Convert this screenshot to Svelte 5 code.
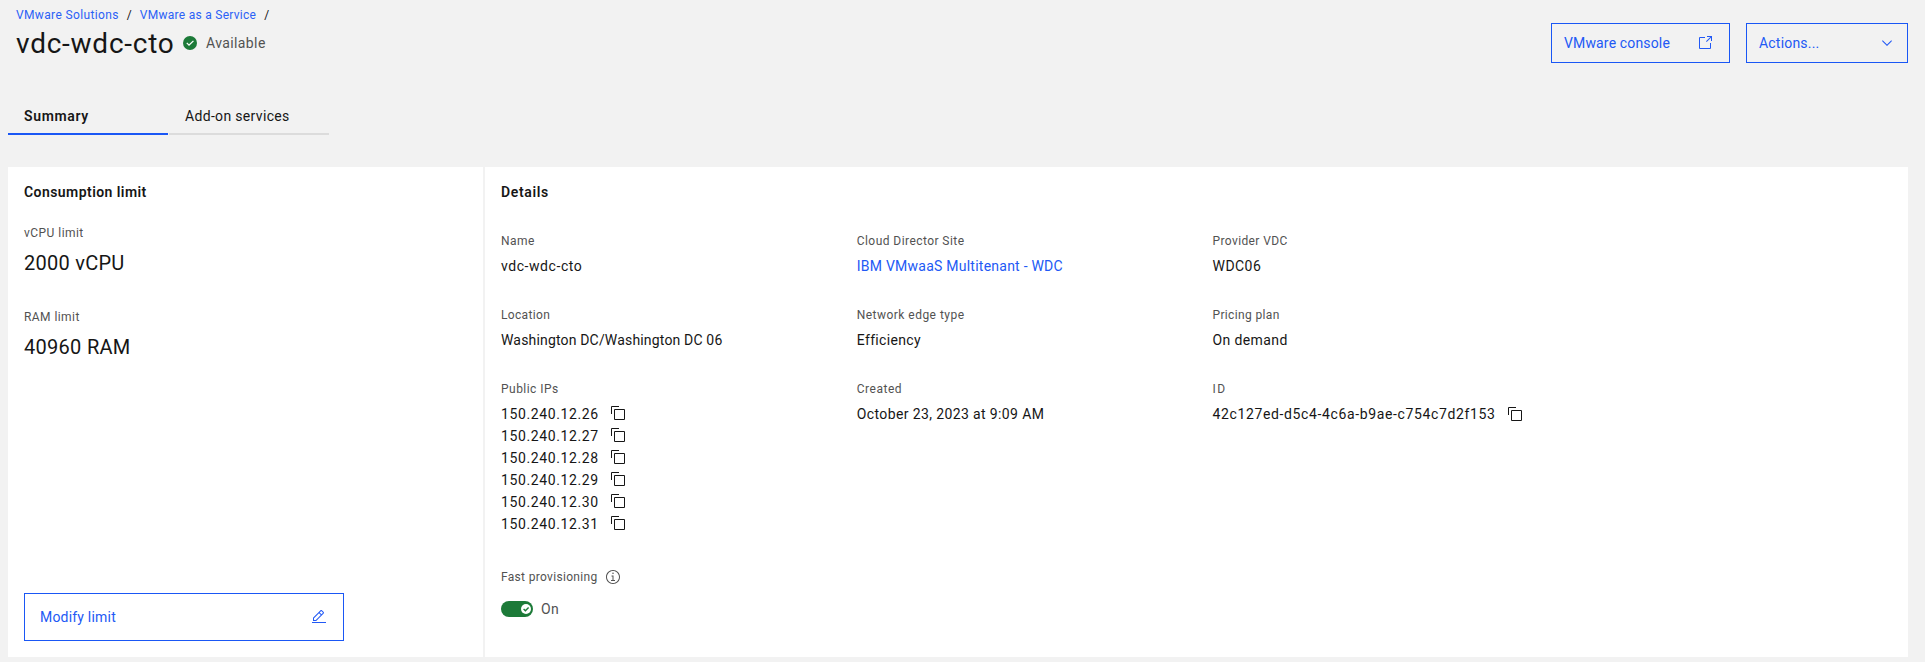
<script>
  // Letter spacing in px for each text; anything unlisted uses the default.
  const tracking = {
    'VMware Solutions': 0.36,
    'VMware as a Service': 0.28,
    title: 0.75,
    Available: 0.39,
    'VMware console': 0.15,
    'Actions...': 0.2,
    Summary: 0.66,
    'Add-on services': 0.33,
    'Consumption limit': 0.44,
    'vCPU limit': 0.46,
    '2000 vCPU': 0.26,
    'RAM limit': 0.43,
    '40960 RAM': 0.29,
    'Modify limit': 0.2,
    Details: 0.66,
    Name: 0.44,
    'vdc-wdc-cto': 0.56,
    'Cloud Director Site': 0.44,
    'IBM VMwaaS Multitenant - WDC': 0.24,
    'Provider VDC': 0.39,
    WDC06: 0.46,
    Location: 0.34,
    'Washington DC/Washington DC 06': 0.17,
    'Network edge type': 0.47,
    Efficiency: 0.34,
    'Pricing plan': 0.35,
    'On demand': 0.39,
    'Public IPs': 0.47,
    ip: 0.61,
    Created: 0.51,
    'October 23, 2023 at 9:09 AM': 0.38,
    ID: 1.6,
    '42c127ed-d5c4-4c6a-b9ae-c754c7d2f153': 0.63,
    'Fast provisioning': 0.32,
    On: 0.3
  };
  const ips = [26, 27, 28, 29, 30, 31].map((n) => `150.240.12.${n}`);
  const details = [
    { label: 'Name', value: 'vdc-wdc-cto' },
    { label: 'Cloud Director Site', value: 'IBM VMwaaS Multitenant - WDC', link: true },
    { label: 'Provider VDC', value: 'WDC06' },
    { label: 'Location', value: 'Washington DC/Washington DC 06' },
    { label: 'Network edge type', value: 'Efficiency' },
    { label: 'Pricing plan', value: 'On demand' },
    { label: 'Public IPs', list: ips },
    { label: 'Created', value: 'October 23, 2023 at 9:09 AM' },
    { label: 'ID', value: '42c127ed-d5c4-4c6a-b9ae-c754c7d2f153', copy: true }
  ];
</script>

{#snippet t(s, key = s)}<span class="t" style:letter-spacing="{tracking[key] ?? 0.3}px">{s}</span>{/snippet}

{#snippet copyIcon()}
  <svg class="copy" width="16" height="16" viewBox="0 0 32 32" fill="currentColor">
    <path d="M28,10V28H10V10H28m0-2H10a2,2,0,0,0-2,2V28a2,2,0,0,0,2,2H28a2,2,0,0,0,2-2V10a2,2,0,0,0-2-2Z" />
    <path d="M4,18H2V4A2,2,0,0,1,4,2H18V4H4Z" />
  </svg>
{/snippet}

<div class="page">
  <header>
    <div class="heading">
      <nav class="crumbs">
        <a href="#solutions">{@render t('VMware Solutions')}</a><i>/</i>
        <a href="#service">{@render t('VMware as a Service')}</a><i>/</i>
      </nav>
      <div class="title">
        <h1>{@render t('vdc-wdc-cto', 'title')}</h1>
        <svg width="16" height="16" viewBox="0 0 16 16">
          <circle cx="8" cy="8" r="7" fill="#1c7a38" />
          <path fill="#fff" d="M7,11L4.3,8.3l0.9-0.8L7,9.3l4-3.9l0.9,0.8L7,11z" />
        </svg>
        <span class="status">{@render t('Available')}</span>
      </div>
    </div>
    <div class="actions">
      <button class="console">
        {@render t('VMware console')}
        <svg width="16" height="16" viewBox="0 0 32 32" fill="currentColor">
          <path d="M26,28H6a2,2,0,0,1-2-2V6A2,2,0,0,1,6,4H16V6H6V26H26V16h2V26A2,2,0,0,1,26,28Z" />
          <path d="M20 2V4H26.586L18 12.586 19.414 14 28 5.414V12H30V2Z" />
        </svg>
      </button>
      <button class="menu">
        {@render t('Actions...')}
        <svg width="16" height="16" viewBox="0 0 16 16" fill="currentColor">
          <path d="M8 11L3 6 3.7 5.3 8 9.6 12.3 5.3 13 6z" />
        </svg>
      </button>
    </div>
  </header>

  <div class="tabs">
    <div class="tab active">{@render t('Summary')}</div>
    <div class="tab">{@render t('Add-on services')}</div>
  </div>

  <main>
    <section class="limits">
      <h2>{@render t('Consumption limit')}</h2>
      <div class="limit">
        <div class="label">{@render t('vCPU limit')}</div>
        <div class="amount">{@render t('2000 vCPU')}</div>
      </div>
      <div class="limit">
        <div class="label">{@render t('RAM limit')}</div>
        <div class="amount">{@render t('40960 RAM')}</div>
      </div>
      <button class="modify">
        {@render t('Modify limit')}
        <svg width="16" height="16" viewBox="0 0 32 32" fill="currentColor">
          <path d="M2 26H30V28H2z" />
          <path d="M25.4,9c.8-.8.8-2,0-2.8l-3.6-3.6c-.8-.8-2-.8-2.8,0l-15,15V24h6.4L25.4,9z M20.4,4L24,7.6l-3,3L17.4,7L20.4,4z M6,22v-3.6l10-10l3.6,3.6l-10,10H6z" />
        </svg>
      </button>
    </section>

    <section class="details">
      <h2>{@render t('Details')}</h2>
      <div class="grid">
        {#each details as d, i}
          <div class="item" style:grid-column={(i % 3) + 1}>
            <div class="label">{@render t(d.label)}</div>
            {#if d.list}
              {#each d.list as ip, n}
                <div class="value ip" class:first={n === 0}>{@render t(ip, 'ip')}{@render copyIcon()}</div>
              {/each}
            {:else}
              <div class="value first" class:link={d.link}>{@render t(d.value)}{#if d.copy}{@render copyIcon()}{/if}</div>
            {/if}
          </div>
        {/each}
      </div>
      <div class="fast">
        <div class="label">
          {@render t('Fast provisioning')}
          <svg width="16" height="16" viewBox="0 0 16 16" fill="currentColor">
            <path d="M8.5 11V6.5H6.5V7.5H7.5V11H6V12H10V11z" />
            <path d="M8,3.5c-0.4,0-0.8,0.3-0.8,0.8S7.6,5,8,5c0.4,0,0.8-0.3,0.8-0.8S8.4,3.5,8,3.5z" />
            <path d="M8,15c-3.9,0-7-3.1-7-7s3.1-7,7-7s7,3.1,7,7S11.9,15,8,15z M8,2C4.7,2,2,4.7,2,8s2.7,6,6,6s6-2.7,6-6S11.3,2,8,2z" />
          </svg>
        </div>
        <div class="switch">
          <svg width="32" height="16" viewBox="0 0 32 16">
            <rect width="32" height="16" rx="8" fill="#1c7a38" />
            <circle cx="25" cy="8" r="5" fill="#fff" />
            <path d="M22.6 8.1L24.4 9.8 27.6 6.6" fill="none" stroke="#1c7a38" stroke-width="1.4" />
          </svg>
          {@render t('On')}
        </div>
      </div>
    </section>
  </main>
</div>

<style>
  :global(body) { background: #f2f2f2; }
  * { box-sizing: border-box; }
  .page {
    height: 662px;
    padding: 0 17px 5px 8px;
    display: flex;
    flex-direction: column;
    overflow: hidden;
    background: #f2f2f2;
    color: #161616;
    font: 14px/22px Roboto, "Open Sans", sans-serif;
  }
  .t { white-space: nowrap; }
  svg { display: block; flex: none; }
  h1, h2 { margin: 0; }
  header { height: 96px; display: flex; justify-content: space-between; padding-left: 8px; }
  .crumbs { display: flex; height: 18px; margin-top: 7px; font-size: 12px; line-height: 16px; }
  .crumbs a { color: #2b61f6; text-decoration: none; }
  .crumbs i { width: 5px; font-style: normal; margin: 0 8px; }
  .title { display: flex; height: 36px; }
  h1 { width: 166px; font-size: 28px; line-height: 37px; font-weight: 400; }
  .title svg { margin-top: 10px; }
  .status { margin: 7px 0 0 8px; color: #525252; }
  .actions { display: flex; gap: 16px; padding-top: 23px; }
  button {
    display: flex;
    align-items: center;
    justify-content: space-between;
    height: 40px;
    padding: 0 16px 0 12px;
    border: 1px solid #1a57f5;
    border-radius: 0;
    background: transparent;
    color: #2259f5;
    font: inherit;
  }
  .console { width: 179px; }
  .menu { width: 162px; padding-right: 12px; }
  .tabs { display: flex; gap: 1px; height: 39px; margin-bottom: 32px; }
  .tab { width: 160px; padding: 9px 16px 0; border-bottom: 2px solid #dcdcdc; }
  .tab.active { border-color: #1a57f5; font-weight: 600; }
  main { display: flex; gap: 2px; height: 490px; }
  section { background: #fff; padding-top: 14px; }
  h2 { font-size: 14px; line-height: 22px; font-weight: 600; }
  .label { font-size: 12px; line-height: 16px; color: #525252; }
  .limits { width: 475px; padding: 14px 16px 16px; display: flex; flex-direction: column; }
  .limit { margin-top: 22px; height: 62px; }
  .amount { margin-top: 8px; font-size: 20px; line-height: 28px; }
  .modify { margin-top: auto; width: 320px; height: 48px; padding: 0 16px 0 15px; }
  .details { flex: 1; }
  .details h2, .item, .fast { padding-left: 16px; }
  .grid { display: grid; grid-template-columns: repeat(4, 25%); row-gap: 30px; margin-top: 30px; }
  .value { display: flex; height: 22px; }
  .value.first { margin-top: 6px; }
  .link { color: #2259f5; }
  .copy { margin: 3px 0 0 12px; }
  .ip .t { width: 97px; }
  .ip .copy { margin-top: 2px; }
  .fast { margin-top: 34px; }
  .fast .label { display: flex; }
  .fast .label .t { width: 104px; }
  .switch { display: flex; gap: 8px; margin-top: 16px; line-height: 16px; color: #525252; }
</style>
